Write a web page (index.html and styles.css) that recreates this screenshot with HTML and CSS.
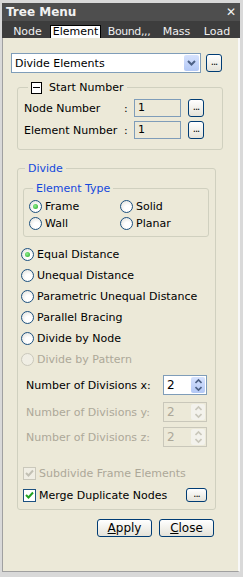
FILE: index.html
```html
<!DOCTYPE html>
<html lang="en">
<head>
    <meta charset="UTF-8">
    <title>Tree Menu</title>
    <link rel="stylesheet" href="styles.css">
</head>
<body>
    <div class="window">
        <div class="titlebar">
            <span class="title">Tree Menu</span>
            <span class="close">✕</span>
        </div>
        <div class="tabs">
            <span class="tab">Node</span>
            <span class="tab active">Element</span>
            <span class="tab">Bound,,,</span>
            <span class="tab">Mass</span>
            <span class="tab">Load</span>
        </div>

        <div class="panel">
            <div class="top-row">
                <div class="combo">
                    <span class="combo-text">Divide Elements</span>
                    <span class="combo-btn">
                        <svg width="9" height="6" viewBox="0 0 9 6"><path d="M1 1 L4.5 4.5 L8 1" fill="none" stroke="#4d6185" stroke-width="2"/></svg>
                    </span>
                </div>
                <span class="dots-btn">...</span>
            </div>

            <fieldset class="group start-group">
                <legend><span class="collapse"></span>Start Number</legend>
                <div class="field-row">
                    <span class="field-label">Node Number</span>
                    <span class="colon">:</span>
                    <span class="num-input">1</span>
                    <span class="dots-btn">...</span>
                </div>
                <div class="field-row">
                    <span class="field-label">Element Number</span>
                    <span class="colon">:</span>
                    <span class="num-input">1</span>
                    <span class="dots-btn">...</span>
                </div>
            </fieldset>

            <fieldset class="group divide-group">
                <legend class="blue">Divide</legend>

                <fieldset class="group type-group">
                    <legend class="blue">Element Type</legend>
                    <div class="type-grid">
                        <label class="opt"><span class="radio on"></span>Frame</label>
                        <label class="opt"><span class="radio"></span>Solid</label>
                        <label class="opt"><span class="radio"></span>Wall</label>
                        <label class="opt"><span class="radio"></span>Planar</label>
                    </div>
                </fieldset>

                <div class="methods">
                    <label class="opt"><span class="radio on"></span>Equal Distance</label>
                    <label class="opt"><span class="radio"></span>Unequal Distance</label>
                    <label class="opt"><span class="radio"></span>Parametric Unequal Distance</label>
                    <label class="opt"><span class="radio"></span>Parallel Bracing</label>
                    <label class="opt"><span class="radio"></span>Divide by Node</label>
                    <label class="opt disabled"><span class="radio"></span>Divide by Pattern</label>
                </div>

                <div class="spins">
                    <div class="spin-row">
                        <span class="spin-label">Number of Divisions x:</span>
                        <span class="spin">
                            <span class="spin-val">2</span>
                            <span class="spin-btns">
                                <svg width="7" height="14" viewBox="0 0 7 14"><path d="M0.5 5 L3.5 2 L6.5 5 M0.5 9 L3.5 12 L6.5 9" fill="none" stroke="#4d6185" stroke-width="1.6"/></svg>
                            </span>
                        </span>
                    </div>
                    <div class="spin-row disabled">
                        <span class="spin-label">Number of Divisions y:</span>
                        <span class="spin">
                            <span class="spin-val">2</span>
                            <span class="spin-btns">
                                <svg width="7" height="14" viewBox="0 0 7 14"><path d="M0.5 5 L3.5 2 L6.5 5 M0.5 9 L3.5 12 L6.5 9" fill="none" stroke="#c9c7ba" stroke-width="1.6"/></svg>
                            </span>
                        </span>
                    </div>
                    <div class="spin-row disabled">
                        <span class="spin-label">Number of Divisions z:</span>
                        <span class="spin">
                            <span class="spin-val">2</span>
                            <span class="spin-btns">
                                <svg width="7" height="14" viewBox="0 0 7 14"><path d="M0.5 5 L3.5 2 L6.5 5 M0.5 9 L3.5 12 L6.5 9" fill="none" stroke="#c9c7ba" stroke-width="1.6"/></svg>
                            </span>
                        </span>
                    </div>
                </div>

                <div class="checks">
                    <label class="opt disabled">
                        <span class="check">
                            <svg width="9" height="9" viewBox="0 0 9 9"><path d="M1 4 L3.5 6.5 L8 1.5" fill="none" stroke="#c2c0b4" stroke-width="2"/></svg>
                        </span>Subdivide Frame Elements
                    </label>
                    <div class="check-row">
                        <label class="opt">
                            <span class="check">
                                <svg width="9" height="9" viewBox="0 0 9 9"><path d="M1 4 L3.5 6.5 L8 1.5" fill="none" stroke="#21a121" stroke-width="2"/></svg>
                            </span>Merge Duplicate Nodes
                        </label>
                        <span class="dots-btn small">...</span>
                    </div>
                </div>
            </fieldset>

            <div class="actions">
                <span class="btn"><u>A</u>pply</span>
                <span class="btn"><u>C</u>lose</span>
            </div>
        </div>
    </div>
</body>
</html>
```

FILE: styles.css
```css
* {
    margin: 0;
    padding: 0;
    box-sizing: border-box;
}

body {
    font-family: "DejaVu Sans", sans-serif;
    font-size: 11px;
    color: #000;
    background: #d9d9d9;
}

.window {
    width: 243px;
    height: 577px;
    padding: 3px 3px 5px 2px;
    background: #d9d9d9;
    display: flex;
    flex-direction: column;
}

.titlebar {
    height: 18px;
    background: #4e4e4e;
    color: #f2f2f2;
    display: flex;
    align-items: center;
    justify-content: space-between;
    padding: 0 4px 0 4px;
}

.title {
    font-weight: bold;
    font-size: 12px;
}

.close {
    font-weight: bold;
    font-size: 12px;
}

.tabs {
    height: 17px;
    background: #3d3d3d;
    display: flex;
    align-items: flex-end;
    gap: 2px;
    padding-left: 5px;
}

.tab {
    color: #f0f0f0;
    height: 13px;
    line-height: 13px;
    text-align: center;
    white-space: nowrap;
}

.tab:nth-child(1) { width: 41px; }
.tab:nth-child(2) { width: 51px; }
.tab:nth-child(3) { width: 52px; letter-spacing: -0.4px; }
.tab:nth-child(4) { width: 39px; }
.tab:nth-child(5) { width: 38px; }

.tab.active {
    background: #fff;
    color: #000;
    border: 1px solid #000;
    border-bottom: none;
    line-height: 12px;
}

.panel {
    flex: 1;
    background: #ece9d8;
    border-left: 1px solid #a0a0a0;
    border-right: 2px solid #f8f8f8;
    border-bottom: 1px solid #a0a0a0;
    padding: 15px 16px 0 8px;
}

.top-row {
    display: flex;
    align-items: center;
    gap: 5px;
}

.combo {
    flex: 1;
    height: 20px;
    background: #fff;
    border: 1px solid #7f9db9;
    display: flex;
    align-items: center;
    justify-content: space-between;
    padding: 0 1px 0 3px;
}

.combo-btn {
    width: 15px;
    height: 16px;
    background: linear-gradient(#d6e2fd, #b3c8f5);
    border-radius: 2px;
    display: flex;
    align-items: center;
    justify-content: center;
}

.dots-btn {
    width: 16px;
    height: 18px;
    border: 1px solid #003c74;
    border-radius: 3px;
    background: linear-gradient(#fff, #e5e3d9);
    font-size: 10px;
    line-height: 13px;
    text-align: center;
    letter-spacing: -1px;
}

.group {
    border: 1px solid #d0d0bf;
    border-radius: 3px;
}

.group legend {
    padding: 0 3px;
    margin-left: 4px;
    display: flex;
    align-items: center;
    gap: 7px;
}

.blue {
    color: #1448dc;
}

.start-group {
    margin: 8px 0 0 6px;
    width: 206px;
    padding: 5px 6px 6px 6px;
}

.collapse {
    width: 11px;
    height: 12px;
    border: 1px solid #000;
    background: #fff;
    position: relative;
}

.collapse::after {
    content: "";
    position: absolute;
    left: 1px;
    right: 1px;
    top: 4px;
    height: 1px;
    background: #000;
}

.field-row {
    display: flex;
    align-items: center;
    height: 18px;
    margin-bottom: 4px;
}

.field-label {
    width: 100px;
}

.colon {
    width: 10px;
}

.num-input {
    width: 47px;
    height: 18px;
    border: 1px solid #7f9db9;
    background: #ece9d8;
    padding-left: 3px;
    line-height: 16px;
    margin-right: 7px;
}

.divide-group {
    margin: 12px 0 0 6px;
    width: 199px;
    padding: 0 6px 7px 3px;
}

.type-group {
    margin: 7px 0 0 2px;
    padding: 5px 6px 6px 5px;
}

.type-grid {
    display: grid;
    grid-template-columns: 91px 1fr;
    row-gap: 4px;
}

.opt {
    display: flex;
    align-items: center;
    gap: 3px;
    height: 13px;
}

.radio {
    width: 13px;
    height: 13px;
    border-radius: 50%;
    border: 1px solid #1c5180;
    background: radial-gradient(circle at 60% 65%, #fff 30%, #dcdcd6 100%);
    position: relative;
    flex-shrink: 0;
}

.radio.on::after {
    content: "";
    position: absolute;
    left: 3px;
    top: 3px;
    width: 5px;
    height: 5px;
    border-radius: 50%;
    background: radial-gradient(circle at 40% 40%, #8ff08f, #21a121);
}

.disabled {
    color: #aca899;
}

.opt.disabled .radio {
    border-color: #cac8bb;
    background: #f0eee4;
}

.methods {
    display: flex;
    flex-direction: column;
    gap: 8px;
    margin-top: 11px;
}

.spins {
    margin-top: 9px;
    display: flex;
    flex-direction: column;
    gap: 7px;
}

.spin-row {
    display: flex;
    align-items: center;
    justify-content: space-between;
    padding: 0 2px 0 5px;
    height: 20px;
}

.spin-row + .spin-row + .spin-row {
    margin-top: -2px;
}

.spin {
    width: 44px;
    height: 20px;
    border: 1px solid #7f9db9;
    background: #fff;
    display: flex;
    justify-content: space-between;
    padding: 1px;
}

.spin-val {
    padding-left: 2px;
    line-height: 16px;
    font-size: 12px;
}

.spin-btns {
    width: 14px;
    background: linear-gradient(#d6e2fd, #b3c8f5);
    border-radius: 2px;
    display: flex;
    align-items: center;
    justify-content: center;
}

.spin-row.disabled .spin {
    background: #ece9d8;
    border-color: #c9c7ba;
}

.spin-row.disabled .spin-btns {
    background: #f3f2ec;
}

.checks {
    margin: 20px 0 0 2px;
    display: flex;
    flex-direction: column;
    gap: 8px;
}

.check {
    width: 13px;
    height: 13px;
    border: 1px solid #1c5180;
    background: #fff;
    display: flex;
    align-items: center;
    justify-content: center;
    flex-shrink: 0;
}

.opt.disabled .check {
    border-color: #cac8bb;
    background: #f0eee4;
}

.check-row {
    display: flex;
    align-items: center;
    justify-content: space-between;
}

.dots-btn.small {
    width: 21px;
    height: 14px;
    line-height: 10px;
    margin-right: 2px;
}

.actions {
    display: flex;
    justify-content: flex-end;
    gap: 7px;
    margin: 9px 8px 0 0;
}

.btn {
    width: 55px;
    height: 18px;
    border: 1px solid #003c74;
    border-radius: 3px;
    background: linear-gradient(#fff, #e5e3d9);
    text-align: center;
    line-height: 16px;
    font-size: 12px;
}
```
